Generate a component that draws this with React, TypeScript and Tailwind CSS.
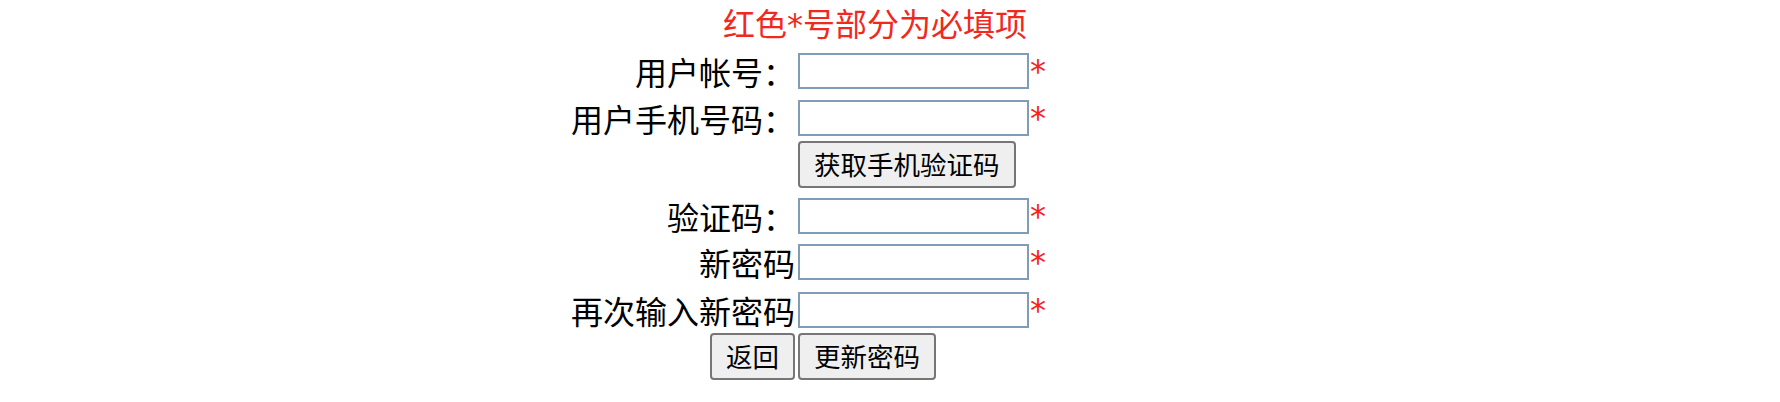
import React from "react";

const font = "font-['Noto_Sans_CJK_SC','Noto_Sans',sans-serif]";
const star = "font-['DejaVu_Sans',sans-serif]";

type FieldProps = {
  label: string;
  className?: string;
};

const Field = ({ label, className = "" }: FieldProps) => (
  <div className={`grid grid-cols-[227px_1fr] items-center ${className}`}>
    <label className="whitespace-nowrap pr-[3px] text-right text-[32px] leading-[36px] text-black">
      {label}
    </label>
    <div className="flex items-start">
      <input
        type="text"
        className="h-[36px] w-[231px] border-2 border-[#7f9db9] bg-white outline-none"
      />
      <span className={`ml-[1px] text-[32px] leading-[36px] text-[#f5221b] ${star}`}>*</span>
    </div>
  </div>
);

const Btn = ({ children }: { children: React.ReactNode }) => (
  <button className="h-[47px] whitespace-nowrap rounded-[4px] border-2 border-[#767676] bg-[#efefef] px-[14px] text-[26.5px] leading-none text-black">
    {children}
  </button>
);

export default function App() {
  return (
    <div className={`h-[402px] w-full bg-white ${font}`}>
      {/* title */}
      <div className="flex justify-center">
        <div className="h-[44px] w-[638px] pr-[30px] text-center text-[32px] leading-[44px] text-[#f0281e]">
          红色<span className={star}>*</span>号部分为必填项
        </div>
      </div>

      <div className="mx-auto flex w-[638px] flex-col">
        <Field label="用户帐号：" className="mt-[9px]" />
        <Field label="用户手机号码：" className="mt-[11px]" />

        <div className="mt-[5px] grid grid-cols-[227px_1fr]">
          <div />
          <div>
            <Btn>获取手机验证码</Btn>
          </div>
        </div>

        <Field label="验证码：" className="mt-[10px]" />
        <Field label="新密码" className="mt-[10px]" />
        <Field label="再次输入新密码" className="mt-[12px]" />

        <div className="mt-[5px] grid grid-cols-[227px_1fr]">
          <div className="flex justify-end pr-[3px]">
            <Btn>返回</Btn>
          </div>
          <div>
            <Btn>更新密码</Btn>
          </div>
        </div>
      </div>
    </div>
  );
}
